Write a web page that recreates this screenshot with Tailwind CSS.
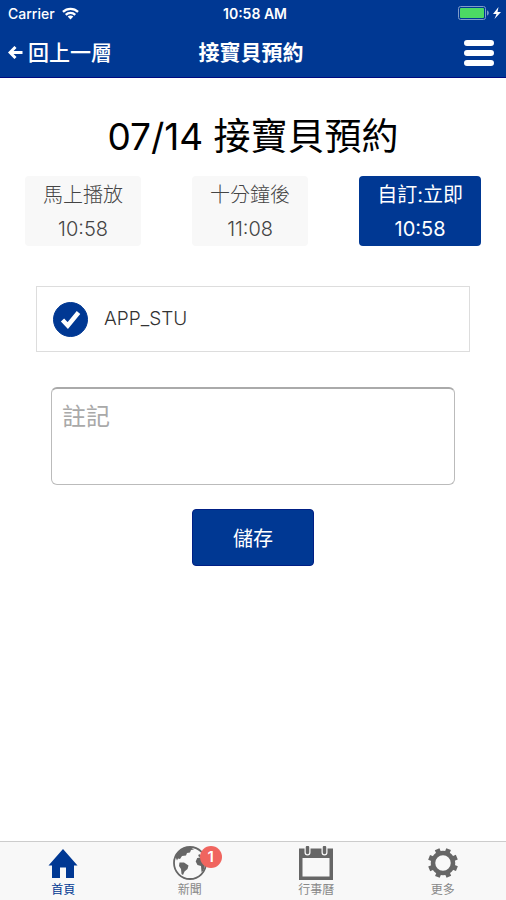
<!DOCTYPE html>
<html lang="zh-Hant">
  <head>
    <meta charset="UTF-8" />
    <meta name="viewport" content="width=device-width, initial-scale=1.0" />
    <title>接寶貝預約</title>
    <script src="https://cdn.jsdelivr.net/npm/@tailwindcss/browser@4"></script>
  </head>
  <body class="flex flex-col min-h-screen bg-white text-black font-[Inter,'Noto_Sans_CJK_TC',sans-serif]">
    <header class="bg-[#003893] text-white border-b border-[#000a80]">
      <!-- Status bar -->
      <div class="grid grid-cols-3 items-center h-[26px] pl-2 pr-1 text-[14px] font-medium">
        <div class="flex items-center gap-[7px]">
          <span>Carrier</span>
          <svg class="w-[17px] h-[13px]" viewBox="0 0 18 13" fill="none" stroke="currentColor" stroke-width="2.4">
            <path d="M1 4.8a11.3 11.3 0 0 1 16 0" />
            <path d="M4 8a7 7 0 0 1 10 0" />
            <path d="M9 12.8 6 9.8a4.2 4.2 0 0 1 6 0z" fill="currentColor" stroke="none" />
          </svg>
        </div>
        <span class="text-center font-semibold">10:58 AM</span>
        <svg class="justify-self-end w-[44px] h-[14px]" viewBox="0 0 44 14">
          <rect x="0.5" y="0.5" width="27" height="13" rx="2" fill="none" stroke="#7f9bc9" />
          <rect x="2" y="2" width="24" height="10" rx="1" fill="#4cd964" />
          <path d="M29 4.5c2.4.6 2.4 4.400 0 5z" fill="#7f9bc9" />
          <path d="M40.500 1 35 8h3.500l-2 5 6.500-7h-3.500z" fill="#fff" />
        </svg>
      </div>
      <!-- Navigation bar -->
      <nav class="grid grid-cols-3 items-center h-[51px] pl-2 pr-3 pt-0.5">
        <a href="#" class="flex items-center gap-[5px] text-[21px] leading-[30px] font-medium whitespace-nowrap">
          <svg class="w-[15px] h-[13px]" viewBox="0 0 15 13" fill="none" stroke="currentColor" stroke-width="3">
            <path d="M14.500 6.500H2M7.500 1 2 6.500 7.500 12" />
          </svg>
          回上一層
        </a>
        <h1 class="text-center text-[21px] leading-[30px] font-bold">接寶貝預約</h1>
        <button type="button" aria-label="選單" class="justify-self-end">
          <svg class="w-[30px] h-[26px]" viewBox="0 0 30 26" stroke="currentColor" stroke-width="6" stroke-linecap="round">
            <path d="M3 3h24M3 13h24M3 23h24" />
          </svg>
        </button>
      </nav>
    </header>

    <main class="flex-1">
      <h2 class="mt-8 text-center text-[37px] leading-[54px]">07/14 接寶貝預約</h2>

      <div class="flex justify-between mt-3 px-[25px] text-[20px] leading-[34px] text-[#444]">
        <button type="button" class="h-[70px] px-[18px] pt-px rounded bg-[#f8f8f8] font-light">馬上播放<br />10:58</button>
        <button type="button" class="h-[70px] px-[18px] pt-px rounded bg-[#f8f8f8] font-light">十分鐘後<br />11:08</button>
        <button type="button" class="h-[70px] px-[18px] pt-px rounded bg-[#003893] text-white">自訂:立即<br />10:58</button>
      </div>

      <label class="flex items-center gap-4 h-[66px] mt-10 mx-9 px-4 border border-[#ddd] text-[19px] font-light text-[#333]">
        <span class="grid">
          <input type="checkbox" checked class="col-start-1 row-start-1 appearance-none size-[35px] rounded-full border border-[#003893] checked:bg-[#003893] peer" />
          <svg class="col-start-1 row-start-1 size-[35px] pointer-events-none hidden peer-checked:block" viewBox="0 0 35 35" fill="none" stroke="#fff" stroke-width="4.500">
            <path d="M9.500 18 14.800 23.500 25.500 10.500" />
          </svg>
        </span>
        APP_STU
      </label>

      <div class="flex flex-col items-center px-[51px] mt-[35px]">
        <textarea aria-label="註記" placeholder="註記" class="block w-full h-[98px] px-2.5 py-2.5 resize-none rounded-md border border-t-2 border-[#bbb] border-t-[#aaa] text-[24px] leading-[36px] placeholder:text-[#a9a9a9]"></textarea>
        <button type="button" class="mt-6 w-[122px] h-[57px] pt-0.5 rounded bg-[#003893] border border-[#001f85] text-white text-[20px]">儲存</button>
      </div>
    </main>

    <!-- Tab bar -->
    <nav class="grid grid-cols-4 h-[59px] pt-1 border-t border-[#ccc] bg-[#f8f8f8] text-[12px] leading-[18px] text-[#888]">
      <a href="#" class="flex flex-col items-center text-[#003893]">
        <svg class="w-[36px] h-[35px]" viewBox="0 0 36 35" fill="currentColor">
          <path d="M18 3 3.500 19.500H7V32h8V21.500h6V32h8V19.500h3.500z" />
        </svg>
        首頁
      </a>
      <a href="#" class="flex flex-col items-center">
        <span class="relative">
          <svg class="w-[36px] h-[35px]" viewBox="0 0 36 35" fill="#666">
            <circle cx="18" cy="17" r="16" fill="none" stroke="#666" stroke-width="1.800" />
            <path d="M3.500 11C6 5 11 1.500 18 1l4 2.500-3 .5-1 2.500-3 .5-1 2.500-4 .5-2 3-2-.5-1 2z" />
            <path d="M7.500 16.500l4.500 0 4.500 3-1 3.500-3 2.500-1.500 3.500-1.500-1-.5-5-2-3z" />
            <path d="M27 8l3 2 2.500 4 .5 5-1.500 5.500-2 1.500-.5-6-3.500-1-1.800-3.500 1.500-3.500 3-.5-2-1.500z" />
          </svg>
          <span class="absolute top-0 left-[28px] size-[22px] rounded-full bg-[#f0655f] text-center text-[15px] leading-[22px] font-semibold text-white">1</span>
        </span>
        新聞
      </a>
      <a href="#" class="flex flex-col items-center">
        <svg class="w-[36px] h-[35px]" viewBox="0 0 36 35">
          <path d="M1 2.500h34V34H1z M4.500 12v18.500h27V12z" fill="#666" fill-rule="evenodd" />
          <path d="M9.500 0v6.500M26.500 0v6.500" stroke="#f8f8f8" stroke-width="6" stroke-linecap="round" />
          <path d="M9.500 1.500v5M26.500 1.500v5" stroke="#666" stroke-width="3.500" stroke-linecap="round" />
        </svg>
        行事曆
      </a>
      <a href="#" class="flex flex-col items-center">
        <svg class="w-[36px] h-[35px]" viewBox="-18 -17 36 35" fill="none" stroke="#666">
          <circle r="10" stroke-width="4.500" />
          <g stroke-width="5">
            <path d="M0-15V-9M0 15V9M-15 0H-9M15 0H9" transform="rotate(22)" />
            <path d="M0-15V-9M0 15V9M-15 0H-9M15 0H9" transform="rotate(67)" />
          </g>
        </svg>
        更多
      </a>
    </nav>
  </body>
</html>
